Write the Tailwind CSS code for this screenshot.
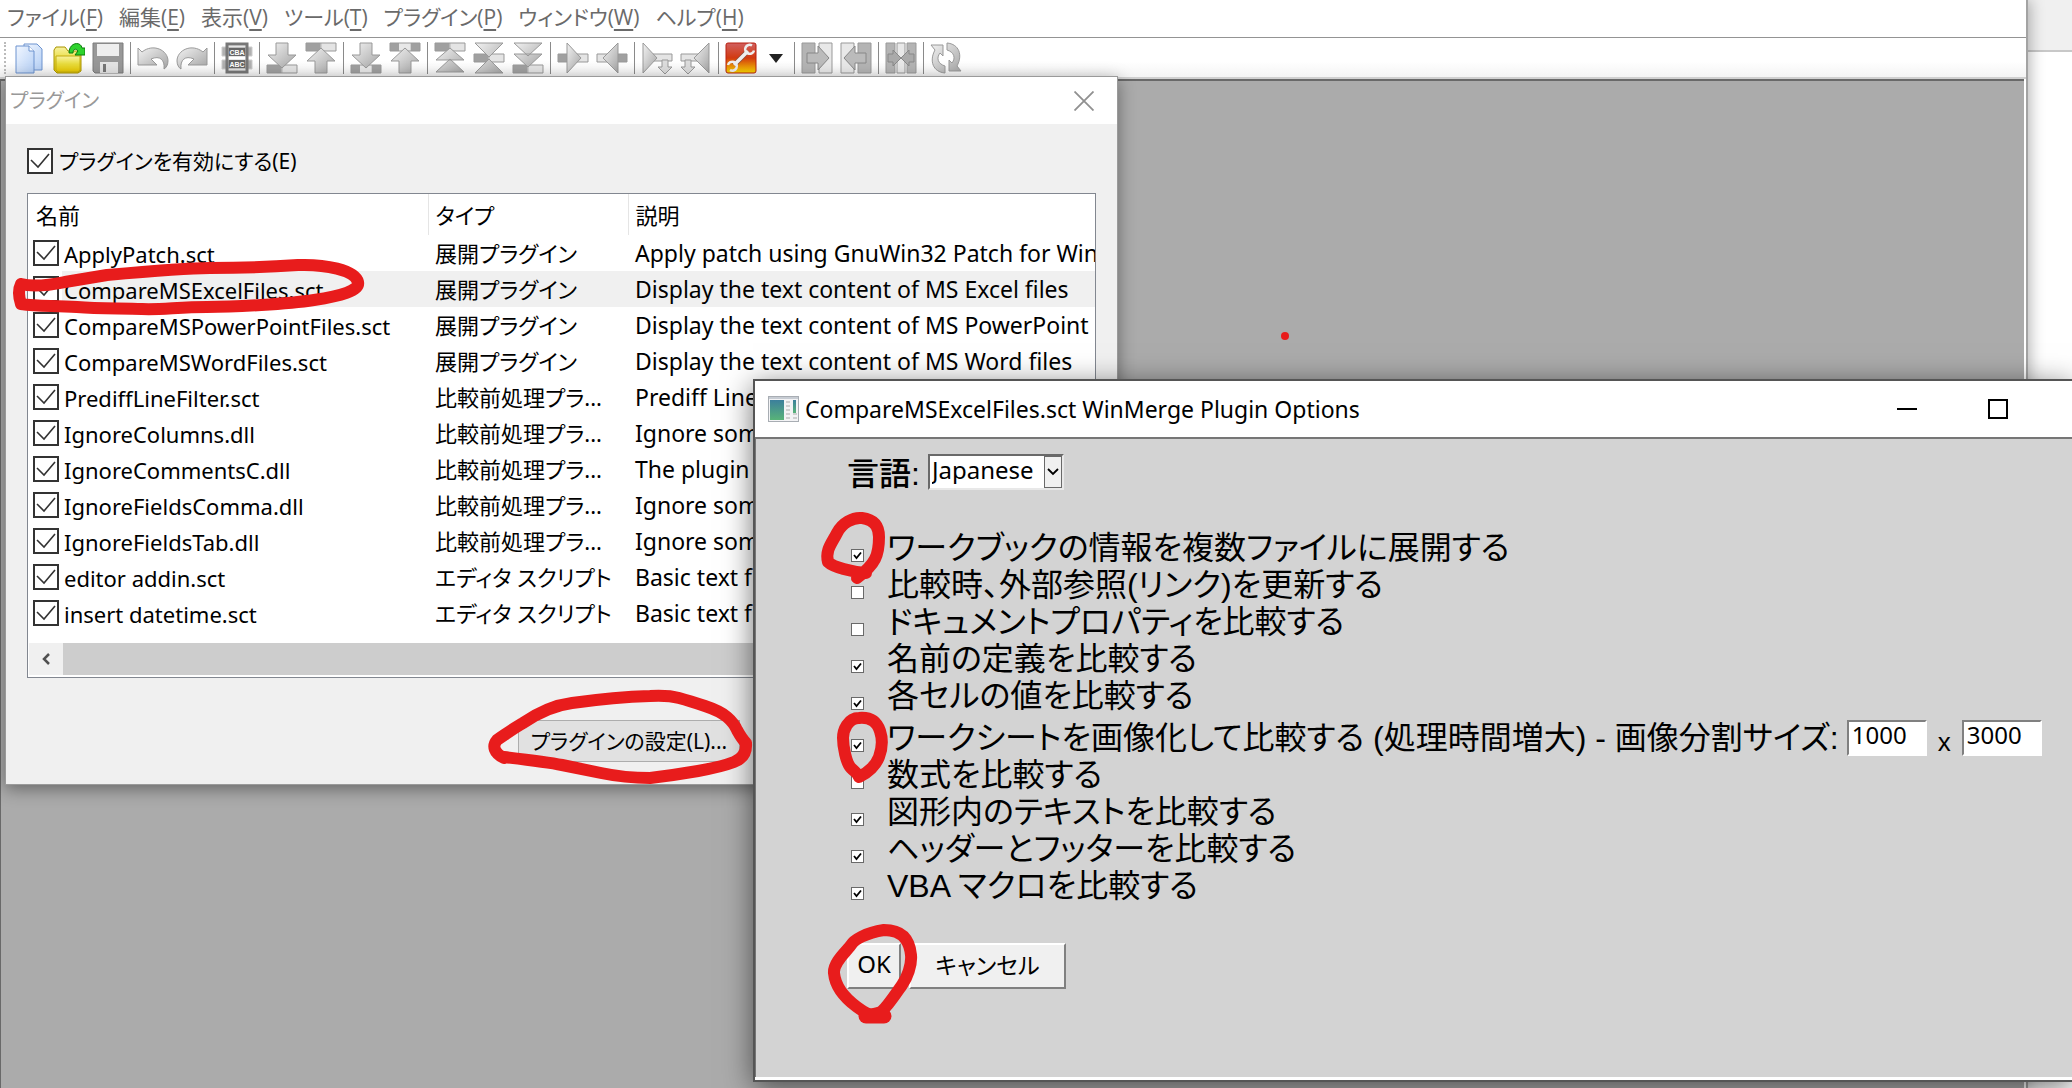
<!DOCTYPE html>
<html lang="ja">
<head>
<meta charset="utf-8">
<title>WinMerge</title>
<script src="https://cdn.jsdelivr.net/npm/@tailwindcss/browser@4"></script>
</head>
<body class="bg-white text-black">
<div class="relative h-screen overflow-hidden font-['Noto_Sans','Noto_Sans_CJK_JP',sans-serif] [font-feature-settings:'palt']">

  <!-- window behind the application -->
  <div class="absolute inset-y-0 right-0 w-16 bg-white"><div class="h-[52px] border-b-2 border-[#c8c8c8] bg-[#f0f0f0]"></div></div>

  <!-- main window -->
  <div class="relative mr-11 flex h-full flex-col border-r-2 border-[#a3a3a3] bg-white shadow-[2px_0_14px_rgba(0,0,0,0.3)]">
    <nav class="flex h-[38px] items-center gap-4 border-b border-[#949494] pb-1 pl-[7px] text-[21px] leading-7 text-[#6a6a6a] [font-family:'Open_Sans','Noto_Sans_CJK_JP',sans-serif]" id="menu"></nav>
    <div class="flex h-[41px] items-center border-b-2 border-[#d0d0d0] bg-linear-to-b from-white from-60% to-[#f4f4f4] pl-1 pt-px" id="toolbar"></div>
    <div class="mr-[2px] flex-1 border-t-2 border-l border-[#696969] bg-[#ababab]"></div>
  </div>

  <!-- plugin dialog -->
  <section class="absolute left-[5px] top-[76px] flex h-[709px] w-[1113px] flex-col border border-[#9a9a9a] bg-[#f0f0f0] shadow-[0_4px_16px_rgba(0,0,0,0.4)]">
    <header class="flex h-[47px] items-center justify-between bg-white pl-1 pr-[23px]">
      <h1 class="text-[20px] leading-8 text-[#999]">プラグイン</h1>
      <button aria-label="閉じる" class="p-0"><svg width="20" height="20" viewBox="0 0 20 20" fill="none" stroke="#909090" stroke-width="1.8"><path d="M0.5 0.5 19.5 19.5M19.5 0.5 0.5 19.5"/></svg></button>
    </header>
    <div class="flex flex-1 flex-col px-[21px] pt-6">
      <label class="flex items-center gap-[6px] text-[21px] leading-[26px]">
        <span class="grid size-[26px]"><input type="checkbox" checked class="size-[26px] appearance-none border-2 border-[#333] bg-white [grid-area:1/1]"><svg class="pointer-events-none [grid-area:1/1]" viewBox="0 0 26 26" fill="none" stroke="#333" stroke-width="1.6"><path d="M4 12l7 7L22 6"/></svg></span>
        <span>プラグインを有効にする(E)</span>
      </label>
      <div class="mt-[19px] h-[485px] overflow-hidden border border-[#828790] bg-white">
        <table class="w-full table-fixed border-collapse text-[22px] leading-[30px]">
          <colgroup><col class="w-[400px]"><col class="w-[200px]"><col></colgroup>
          <thead><tr class="h-[41px] text-left">
            <th class="border-r border-[#e5e5e5] p-0 pl-2 font-normal">名前</th>
            <th class="border-r border-[#e5e5e5] p-0 pl-[7px] font-normal">タイプ</th>
            <th class="p-0 pl-[7px] font-normal">説明</th></tr></thead>
          <tbody id="plugins"></tbody>
        </table>
        <div class="mt-3 flex h-8 pl-px">
          <button aria-label="左へスクロール" class="flex w-[34px] items-center justify-center bg-[#f0f0f0]"><svg width="10" height="12" viewBox="0 0 10 12" fill="none" stroke="#505050" stroke-width="2.5"><path d="M8 1 3 6l5 5"/></svg></button>
          <div class="flex-1 bg-[#cdcdcd]"></div>
        </div>
      </div>
      <button class="ml-[491px] mt-[42px] h-[42px] w-[222px] border border-[#adadad] bg-[#e1e1e1] text-[21px] leading-7">プラグインの設定(L)...</button>
    </div>
  </section>

  <!-- plugin options dialog -->
  <section class="absolute left-[753px] right-0 top-[379px] flex h-[703px] flex-col border-y-2 border-l-2 border-[#555] bg-white pb-[3px] shadow-[0_6px_28px_rgba(0,0,0,0.55)]">
    <header class="flex h-14 items-center bg-white pl-[13px] pr-16">
      <svg width="31" height="26" viewBox="0 0 31 26"><defs><linearGradient id="app" x2="0" y2="1"><stop stop-color="#3c7f9c"/><stop offset="1" stop-color="#58b378"/></linearGradient></defs><rect x=".5" y=".5" width="30" height="25" fill="#f3f3f5" stroke="#a8adb3"/><path d="M1 2h29" stroke="#c7ccd3" stroke-width="2"/><path d="M2 4h14v20H2z" fill="url(#app)"/><path d="M18 6h4M18 10h4M18 14h4M18 18h4M18 22h4M25 18h4M25 22h4" stroke="#c3c3c3" stroke-width="1.5"/><path d="M25 4h3v13h-3z" fill="url(#app)"/></svg>
      <h2 class="ml-[6px] flex-1 text-[23px] leading-8">CompareMSExcelFiles.sct WinMerge Plugin Options</h2>
      <div class="flex gap-[71px]">
        <button aria-label="最小化" class="p-0"><svg width="20" height="20"><path d="M0 10h20" stroke="#000" stroke-width="2"/></svg></button>
        <button aria-label="最大化" class="p-0"><svg width="20" height="20"><rect x="1" y="1" width="18" height="18" fill="none" stroke="#000" stroke-width="2"/></svg></button>
      </div>
    </header>
    <form class="flex-1 border-l border-t-2 border-[#767676] bg-[#d3d3d3] pl-[91px] pt-[15px] font-['Liberation_Sans','Noto_Sans_CJK_JP',sans-serif] text-[32px] leading-[37px]">
      <div class="flex items-start gap-2">
        <label for="lang" class="pt-[2px] font-medium">言語:</label>
        <span class="grid h-9 w-[136px] grid-cols-[1fr_20px]">
          <select id="lang" class="col-span-full row-start-1 h-9 appearance-none border-2 border-b-[#e8e8e8] border-l-[#696969] border-r-[#e8e8e8] border-t-[#696969] bg-white pb-1 pl-[2px] font-['Noto_Sans',sans-serif] text-[24px] leading-7"><option>Japanese</option></select>
          <svg class="pointer-events-none col-start-2 row-start-1 mt-[2px]" width="18" height="32"><rect x=".5" y=".5" width="17" height="31" fill="#f0f0f0" stroke="#696969"/><path d="M4 13l5 5 5-5" fill="none" stroke="#000" stroke-width="1.8"/></svg>
        </span>
      </div>
      <div class="mt-[37px]" id="options"></div>
      <div class="mt-[38px] flex gap-2">
        <button type="button" class="h-[46px] w-[54px] border-2 border-b-[#808080] border-l-white border-r-[#808080] border-t-white bg-[#f0f0f0] pb-1 font-['Noto_Sans',sans-serif] text-[24px] leading-7">OK</button>
        <button type="button" class="h-[46px] w-[157px] border-2 border-b-[#808080] border-l-white border-r-[#808080] border-t-white bg-[#f0f0f0] pb-1 font-['Noto_Sans_CJK_JP',sans-serif] text-[23px] leading-7">キャンセル</button>
      </div>
    </form>
  </section>

  <!-- freehand marks -->
  <svg class="pointer-events-none absolute left-0 top-0" width="2072" height="1088" fill="none" stroke="#e81c1c" stroke-width="12" stroke-linecap="round" stroke-linejoin="round">
    <path d="M21 284C36 288 60 283 65 282L107 275C140 272 185 268 210 268S270 267 298 265C325 264 355 270 358 282C360 291 340 296 314 300S235 307 207 307S160 310 142 309S100 309 77 307S40 307 21 304C19 298 18 290 21 284"/>
    <path d="M504 758C494 753 492 746 497 740C506 734 514 728 523 723Q548 706 572 703Q615 697 650 696Q668 695 679 698T705 706T727 717T737 730Q742 739 746 743Q747 757 734 762T698 771T650 778Q625 778 601 773T562 765T504 757"/>
    <path d="M866 573C852 572 833 567 828 562C825 550 832 543 837 533S853 517 862 518C877 520 879 530 879 537S878 553 875 559S865 572 857 578"/>
    <path d="M859 718C848 718 843 730 843 738S846 763 851 768S857 772 859 777C868 773 876 765 879 757S883 740 880 731S871 717 859 718Z"/>
    <path d="M884 930C865 933 854 940 851 945S833 962 834 973S842 996 857 1007S872 1014 878 1013S897 992 902 985S912 965 911 955S906 930 884 930Z"/>
    <path d="M866 1016L884 1016" stroke-width="15"/>
    <circle cx="1285" cy="336" r="4" fill="#e81c1c" stroke="none"/>
  </svg>
</div>

<svg width="0" height="0" class="absolute"><defs>
  <linearGradient id="g" x2="1" y2="1"><stop stop-color="#f2f2f2"/><stop offset="1" stop-color="#a4a4a4"/></linearGradient>
  <linearGradient id="bar" x2="1"><stop offset=".45" stop-color="#a0a0a0"/><stop offset=".55" stop-color="#e4e4e4"/></linearGradient>
  <linearGradient id="barb" x2="1"><stop offset=".3" stop-color="#a0a0a0"/><stop offset=".31" stop-color="#e8e8e8"/><stop offset=".68" stop-color="#e8e8e8"/><stop offset=".69" stop-color="#a0a0a0"/></linearGradient>
  <linearGradient id="bl" x2="1" y2="1"><stop stop-color="#f2f7ff"/><stop offset="1" stop-color="#b4cff5"/></linearGradient>
  <linearGradient id="ye" x2="0" y2="1"><stop stop-color="#f8f2a0"/><stop offset=".5" stop-color="#e8dc3c"/><stop offset="1" stop-color="#e8c800"/></linearGradient>
  <linearGradient id="rd" x2="0" y2="1"><stop stop-color="#d06060"/><stop offset=".5" stop-color="#d23a10"/><stop offset="1" stop-color="#fbd800"/></linearGradient>
</defs></svg>

<script>
const menu = [['ファイル','F'],['編集','E'],['表示','V'],['ツール','T'],['プラグイン','P'],['ウィンドウ','W'],['ヘルプ','H']];
document.getElementById('menu').innerHTML = menu.map(([t,k]) => `<a href="#">${t}(<span class="underline underline-offset-4">${k}</span>)</a>`).join('');

const S = 'stroke="#999" stroke-width="1"';
const icons = {
  new: '<path d="M10 2h13l5 5v21H10z" fill="url(#bl)" stroke="#6d93cf"/><path d="M2 4h13l5 5v22H2z" fill="url(#bl)" stroke="#6d93cf"/><path d="M15 4v5h5" fill="#fff" stroke="#6d93cf"/>',
  open: '<path d="M1 8l2-3h9l3 4h13v20l-3 2H4l-3-3z" fill="url(#ye)" stroke="#a89400"/><path d="M3 14h24v14l-2 2H5l-2-2z" fill="url(#ye)" stroke="#c4ac10"/><path d="M16 11C16 0 28-1 29 6h3v7H22l3-4c-2-3-5-2-5 2z" fill="#2ed32e" stroke="#0b7a0b"/>',
  save: '<path d="M1 1h30v30H3l-2-2z" fill="#989898" stroke="#7c7c7c"/><path d="M5 2h22v12H5z" fill="#eee"/><path d="M8 20h18v11H8z" fill="#e4e4e4"/><path d="M11 22h3v8h-3z" fill="#777"/>',
  undo: `<path d="M1 6l4 4C16 1 31 8 31 19c0 4-2 7-4 8 1-9-4-14-13-10l6 6H1z" fill="url(#g)" ${S}/>`,
  redo: `<path d="M31 6l-4 4C16 1 1 8 1 19c0 4 2 7 4 8-1-9 4-14 13-10l-6 6h19z" fill="url(#g)" ${S}/>`,
  abc: '<path d="M1 5h30v9H1zM1 18h30v9H1z" fill="#b0b0b0" stroke="#ccc"/><path d="M6 2h20v28H6z" fill="none" stroke="#777" stroke-width="3"/><path d="M8 6h16v8H8zM8 18h16v8H8z" fill="#666"/><text x="16" y="13" text-anchor="middle" font-size="7" font-weight="700" fill="#fff" font-family="Liberation Sans">CBA</text><text x="16" y="25" text-anchor="middle" font-size="7" font-weight="700" fill="#fff" font-family="Liberation Sans">ABC</text>',
  down: `<path d="M1 23h30v8H1z" fill="url(#bar)" ${S}/><path d="M10 1h12v12h8L16 26 2 13h8z" fill="url(#g)" ${S}/>`,
  up: `<path d="M1 1h30v8H1z" fill="url(#bar)" ${S}/><path d="M10 31h12V19h8L16 6 2 19h8z" fill="url(#g)" ${S}/>`,
  downb: `<path d="M1 23h30v8H1z" fill="url(#barb)" ${S}/><path d="M10 1h12v12h8L16 26 2 13h8z" fill="url(#g)" ${S}/>`,
  upb: `<path d="M1 1h30v8H1z" fill="url(#barb)" ${S}/><path d="M10 31h12V19h8L16 6 2 19h8z" fill="url(#g)" ${S}/>`,
  first: `<path d="M1 1h30v8H1z" fill="url(#bar)" ${S}/><path d="M16 6l14 12H2zM16 17l14 13H2z" fill="url(#g)" ${S}/>`,
  cur: `<path d="M1 12h30v8H1z" fill="url(#bar)" ${S}/><path d="M2 1h28L16 15zM16 17l14 14H2z" fill="url(#g)" ${S}/>`,
  last: `<path d="M1 23h30v8H1z" fill="url(#bar)" ${S}/><path d="M2 1h28L16 14zM2 12h28L16 25z" fill="url(#g)" ${S}/>`,
  right: `<path d="M1 12h30v8H1z" fill="url(#bar)" ${S}/><path d="M10 1l14 15-14 15z" fill="url(#g)" ${S}/>`,
  left: `<path d="M1 12h10v8H1z" fill="#e4e4e4" ${S}/><path d="M20 12h11v8H20z" fill="#a0a0a0" ${S}/><path d="M22 1L7 16l15 15z" fill="url(#g)" ${S}/>`,
  rightd: `<path d="M12 12h19v7H12z" fill="#e4e4e4" ${S}/><path d="M2 1l14 15L2 31z" fill="url(#g)" ${S}/><path d="M21 18h6v7h4l-7 7-7-7h4z" fill="#ddd" ${S}/>`,
  leftd: `<path d="M1 12h19v7H1z" fill="#e4e4e4" ${S}/><path d="M29 1L14 16l15 15z" fill="url(#g)" ${S}/><path d="M5 18h6v7h4l-7 7-7-7h4z" fill="#ddd" ${S}/>`,
  wrench: '<rect x="1" y="1" width="30" height="30" rx="2" fill="url(#rd)" stroke="#b82010"/><path d="M9 23L23 9" stroke="#8a4a3a" stroke-width="5"/><path d="M9 23L23 9" stroke="#eee" stroke-width="3.500"/><path d="M27 3.500a4.500 4.500 0 1 0 2 5M3 23a4.500 4.500 0 1 1 2 5" fill="none" stroke="#eee" stroke-width="2.500"/>',
  allr: `<path d="M1 1h13v30H1z" fill="#b4b4b4" ${S}/><path d="M18 1h13v30H18z" fill="#e8e8e8" ${S}/><path d="M6 11h11V4l11 12-11 12v-7H6z" fill="#bbb" stroke="#888"/>`,
  alll: `<path d="M1 1h13v30H1z" fill="#e8e8e8" ${S}/><path d="M18 1h13v30H18z" fill="#b4b4b4" ${S}/><path d="M26 11H15V4L4 16l11 12v-7h11z" fill="#bbb" stroke="#888"/>`,
  merge: `<path d="M1 1h9v30H1zM22 1h9v30h-9z" fill="#b4b4b4" ${S}/><path d="M12 1h8v30h-8z" fill="#e8e8e8" ${S}/><path d="M3 12h5V8l8 8-8 8v-4H3zM29 12h-5V8l-8 8 8 8v-4h5z" fill="#aaa" stroke="#888"/>`,
  refresh: `<path d="M1 3h12v11l-3-3c-4 5-2 11 5 13v7C3 30-1 19 5 8zM31 29H19V18l3 3c4-5 2-11-5-13V1c12 1 16 12 10 23z" fill="url(#g)" ${S}/>`
};
const bar = ['new','open','save','|','undo','redo','|','abc','|','down','up','|','downb','upb','|','first','cur','last','|','right','left','|','rightd','leftd','|','wrench','v','|','allr','alll','|','merge','|','refresh'];
document.getElementById('toolbar').innerHTML = '<span class="mr-1 h-8 border-l-2 border-dotted border-[#bbb]"></span>' + bar.map(n =>
  n === '|' ? '<span class="flex w-[6px] shrink-0 justify-center"><span class="h-8 w-px bg-[#8a8a8a]"></span></span>' :
  n === 'v' ? '<button aria-label="メニュー" class="flex w-[31px] shrink-0 justify-center"><svg width="14" height="9"><path d="M0 0h14L7 9z" fill="#222"/></svg></button>' :
  `<button aria-label="${n}" class="flex w-[39px] shrink-0 justify-center"><svg width="32" height="32" viewBox="0 0 32 32">${icons[n]}</svg></button>`).join('');

const E = '展開プラグイン', P = '比較前処理プラ...', T = 'エディタ スクリプト';
const rows = [['ApplyPatch.sct',E,'Apply patch using GnuWin32 Patch for Win'],['CompareMSExcelFiles.sct',E,'Display the text content of MS Excel files'],['CompareMSPowerPointFiles.sct',E,'Display the text content of MS PowerPoint'],['CompareMSWordFiles.sct',E,'Display the text content of MS Word files'],['PrediffLineFilter.sct',P,'Prediff Line Filter'],['IgnoreColumns.dll',P,'Ignore some columns'],['IgnoreCommentsC.dll',P,'The plugin ignores'],['IgnoreFieldsComma.dll',P,'Ignore some fields'],['IgnoreFieldsTab.dll',P,'Ignore some fields'],['editor addin.sct',T,'Basic text functions'],['insert datetime.sct',T,'Basic text functions']];
document.getElementById('plugins').innerHTML = rows.map(([a,b,c],i) => { const bg = i === 1 ? 'bg-[#f0f0f0]' : 'bg-white'; return `<tr class="h-9 whitespace-nowrap">
 <td class="p-0 pl-[5px]"><label class="flex items-center gap-[3px]"><span class="grid size-[26px] shrink-0"><input type="checkbox" checked class="size-[26px] appearance-none border-2 border-[#333] bg-white [grid-area:1/1]"><svg class="pointer-events-none [grid-area:1/1]" viewBox="0 0 26 26" fill="none" stroke="#333" stroke-width="1.6"><path d="M4 12l7 7L22 6"/></svg></span><span class="h-9 flex-1 pl-[2px] pt-1 ${bg}">${a}</span></label></td>
 <td class="p-0 pl-[7px] ${bg}">${b}</td><td class="overflow-hidden p-0 pl-[7px] text-[23px] ${bg}">${c}</td></tr>`; }).join('');

const opts = [[1,'ワークブックの情報を複数ファイルに展開する'],[0,'比較時、外部参照(リンク)を更新する'],[0,'ドキュメントプロパティを比較する'],[1,'名前の定義を比較する'],[1,'各セルの値を比較する'],[1,'ワークシートを画像化して比較する (処理時間増大) - 画像分割サイズ:'],[0,'数式を比較する'],[1,'図形内のテキストを比較する'],[1,'ヘッダーとフッターを比較する'],[1,'VBA マクロを比較する']];
const field = (v,l) => `<input type="text" aria-label="${l}" value="${v}" class="h-9 w-20 border-2 border-b-white border-l-[#808080] border-r-white border-t-[#808080] bg-white pb-2 pl-[3px] font-['Noto_Sans',sans-serif] text-[24px] leading-7">`;
document.getElementById('options').innerHTML = opts.map(([c,t],i) => `<div class="flex items-center whitespace-nowrap ${i === 5 ? 'h-[42px] pt-1' : 'h-[37px]'}">
 <span class="ml-[4px] mt-[14px] grid size-[13px] shrink-0"><input type="checkbox" id="o${i}" ${c ? 'checked' : ''} class="size-[13px] appearance-none border border-[#696969] bg-white [grid-area:1/1]">${c ? '<svg class="pointer-events-none [grid-area:1/1]" viewBox="0 0 13 13" fill="none" stroke="#000" stroke-width="1.8"><path d="M3 6l2.500 3L10 3.500"/></svg>' : ''}</span>
 <label for="o${i}" class="ml-[23px]">${t}</label>${i === 5 ? `<span class="ml-2 flex items-center">${field(1000,'幅')}<span class="mx-[11px] pt-2 text-[26px]">x</span>${field(3000,'高さ')}</span>` : ''}</div>`).join('');
</script>
</body>
</html>
